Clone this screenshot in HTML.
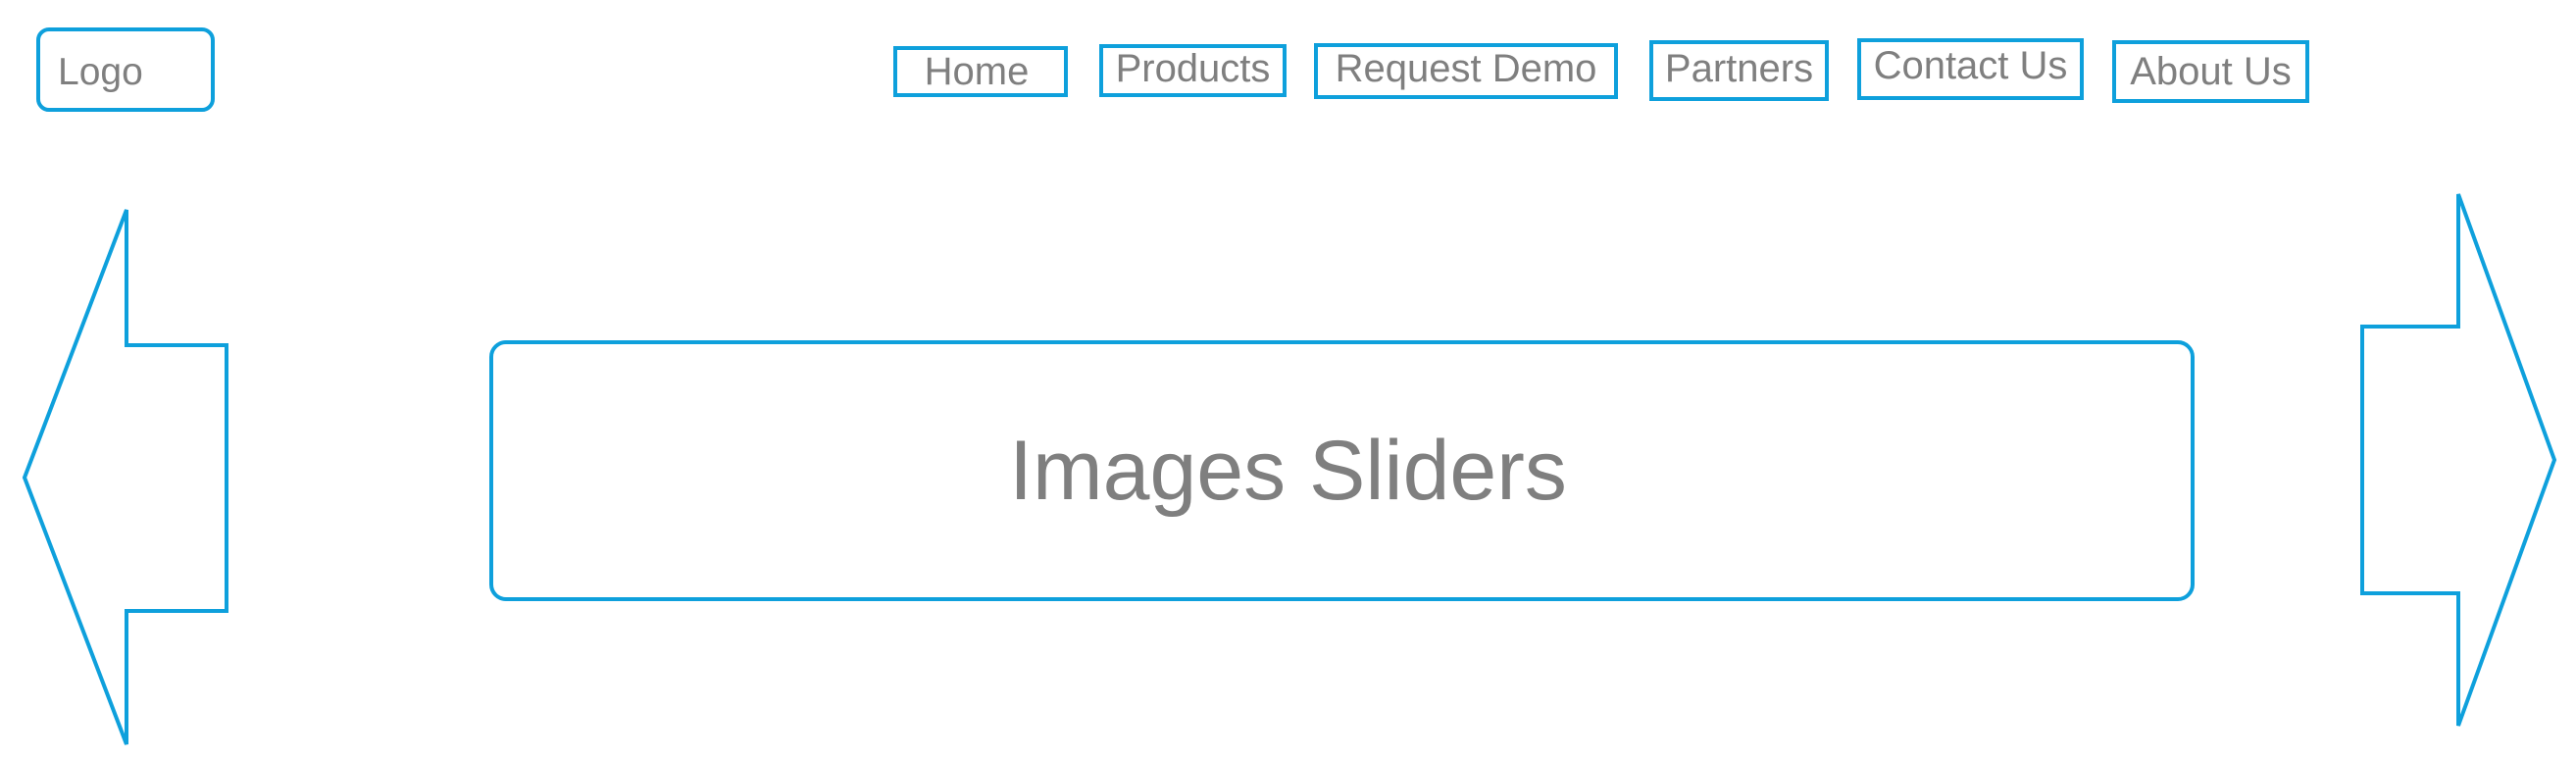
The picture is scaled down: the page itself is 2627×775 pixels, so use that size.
<!DOCTYPE html>
<html><head><meta charset="utf-8"><style>
html,body{margin:0;padding:0;background:#fff;width:2627px;height:775px;overflow:hidden;position:relative;font-family:"Liberation Sans",sans-serif;color:#7f7f7f}
.b{position:absolute;border:4px solid #0ea0dc;box-sizing:border-box;display:flex;align-items:center;justify-content:center;font-size:40px;white-space:nowrap;}
</style></head><body>
<div class="b" style="left:37px;top:28px;width:182px;height:86px;border-radius:13px;justify-content:flex-start;padding-left:18px;padding-top:6px;font-size:39px">Logo</div>
<div class="b" style="left:911px;top:47px;width:178px;height:52px;padding-right:8px">Home</div>
<div class="b" style="left:1121px;top:45px;width:191px;height:54px;padding-bottom:4px">Products</div>
<div class="b" style="left:1340px;top:44px;width:310px;height:57px;padding-bottom:4px">Request Demo</div>
<div class="b" style="left:1682px;top:41px;width:183px;height:62px;padding-bottom:4px">Partners</div>
<div class="b" style="left:1894px;top:39px;width:231px;height:63px;padding-bottom:6px">Contact Us</div>
<div class="b" style="left:2154px;top:41px;width:201px;height:64px">About Us</div>
<div class="b" style="left:499px;top:347px;width:1739px;height:266px;border-radius:17px;font-size:86px;padding-right:110px">Images Sliders</div>
<svg width="2627" height="775" style="position:absolute;left:0;top:0" fill="none" stroke="#0ea0dc" stroke-width="4">
<polygon points="25,487 129,214 129,352 231,352 231,623 129,623 129,759"/>
<polygon points="2507,198 2507,333 2409,333 2409,605 2507,605 2507,740 2605,469"/>
</svg>
</body></html>
